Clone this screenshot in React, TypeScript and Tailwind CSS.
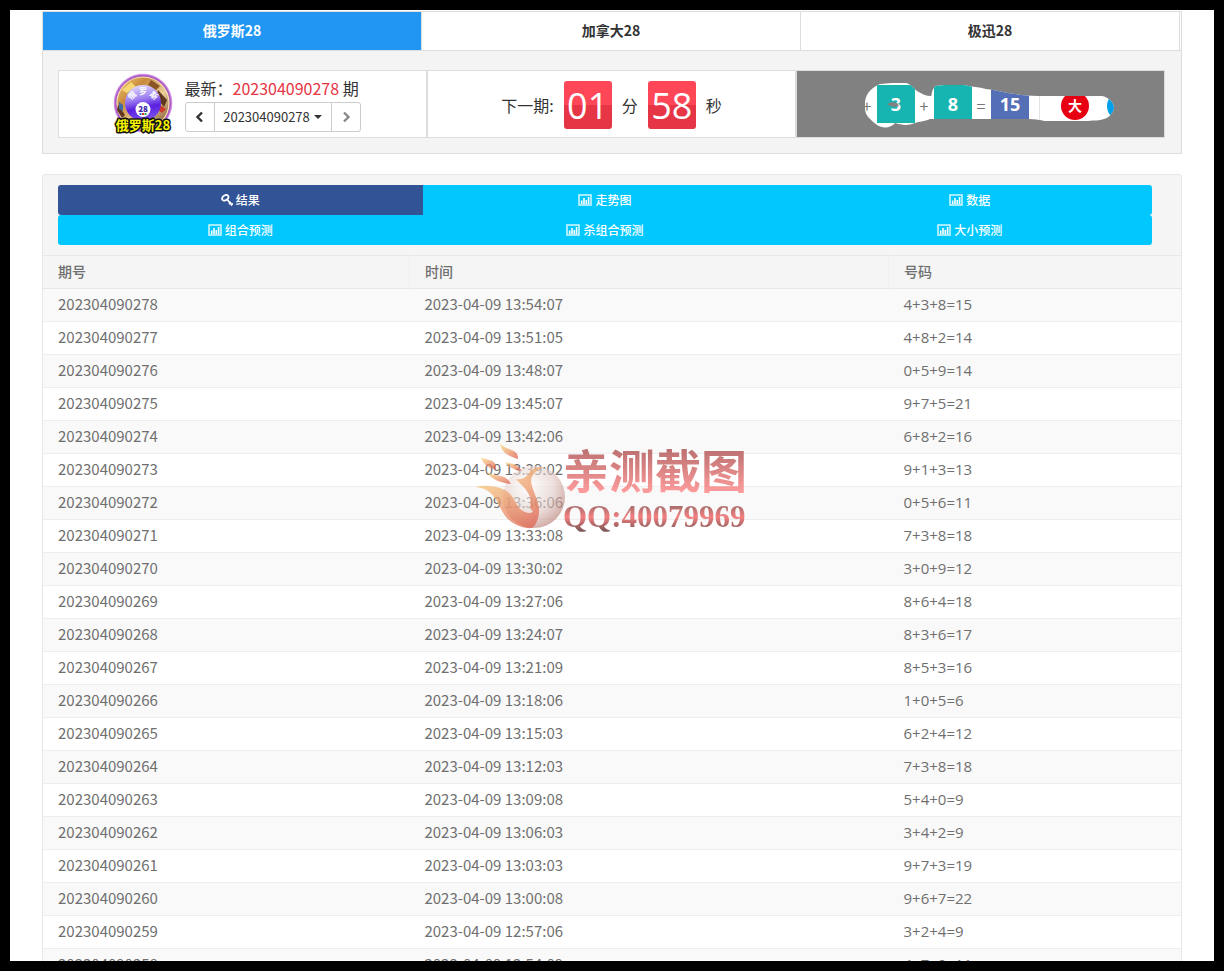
import React, { useState } from 'react';

const font = `font-['Noto_Sans_CJK_SC',sans-serif]`;
const digitFont = `font-['Open_Sans','Noto_Sans_CJK_SC',sans-serif]`;

const games = ['俄罗斯28', '加拿大28', '极迅28'];

const views = ['结果', '走势图', '数据', '组合预测', '杀组合预测', '大小预测'];

const draws = [
  ['202304090278', '2023-04-09 13:54:07', '4+3+8=15'],
  ['202304090277', '2023-04-09 13:51:05', '4+8+2=14'],
  ['202304090276', '2023-04-09 13:48:07', '0+5+9=14'],
  ['202304090275', '2023-04-09 13:45:07', '9+7+5=21'],
  ['202304090274', '2023-04-09 13:42:06', '6+8+2=16'],
  ['202304090273', '2023-04-09 13:39:02', '9+1+3=13'],
  ['202304090272', '2023-04-09 13:36:06', '0+5+6=11'],
  ['202304090271', '2023-04-09 13:33:08', '7+3+8=18'],
  ['202304090270', '2023-04-09 13:30:02', '3+0+9=12'],
  ['202304090269', '2023-04-09 13:27:06', '8+6+4=18'],
  ['202304090268', '2023-04-09 13:24:07', '8+3+6=17'],
  ['202304090267', '2023-04-09 13:21:09', '8+5+3=16'],
  ['202304090266', '2023-04-09 13:18:06', '1+0+5=6'],
  ['202304090265', '2023-04-09 13:15:03', '6+2+4=12'],
  ['202304090264', '2023-04-09 13:12:03', '7+3+8=18'],
  ['202304090263', '2023-04-09 13:09:08', '5+4+0=9'],
  ['202304090262', '2023-04-09 13:06:03', '3+4+2=9'],
  ['202304090261', '2023-04-09 13:03:03', '9+7+3=19'],
  ['202304090260', '2023-04-09 13:00:08', '9+6+7=22'],
  ['202304090259', '2023-04-09 12:57:06', '3+2+4=9'],
  ['202304090258', '2023-04-09 12:54:09', '4+7+0=11'],
];

function StatsIcon() {
  return (
    <svg className="w-3.5 h-3 shrink-0" viewBox="0 0 14 12" fill="none" stroke="currentColor" aria-hidden="true">
      <rect x="1" y="1" width="12" height="10" strokeWidth="1.5" opacity="0.85" />
      <path d="M3.700 10V6.500M6 10V4M8.300 10V6M10.600 10V3" strokeWidth="1.6" />
    </svg>
  );
}

function KeyIcon() {
  return (
    <svg className="w-3 h-3 shrink-0" viewBox="0 0 12 12" fill="none" stroke="currentColor" aria-hidden="true">
      <ellipse cx="4.3" cy="3.8" rx="3.4" ry="2.4" strokeWidth="1.8" transform="rotate(-35 4.3 3.8)" />
      <path d="M6.200 5.500L11 11.200M8 10.200L10 8M10 11.500L11.800 9.400" strokeWidth="1.7" />
    </svg>
  );
}

function Chevron({ d }: { d: string }) {
  return (
    <svg className="w-3 h-3" viewBox="0 0 12 12" fill="none" stroke="currentColor" strokeWidth="2.4" aria-hidden="true">
      <path d={d} />
    </svg>
  );
}

function GameLogo() {
  return (
    <svg className="w-[60px] h-[62px] shrink-0" viewBox="0 0 60 62" role="img" aria-label="俄罗斯28">
      <defs>
        <radialGradient id="rim">
          <stop offset="0.86" stopColor="#8d3ca6" />
          <stop offset="0.94" stopColor="#b45fce" />
          <stop offset="1" stopColor="#e6c4f0" />
        </radialGradient>
        <linearGradient id="gold" x1="0" y1="0" x2="1" y2="1">
          <stop offset="0" stopColor="#f6d27a" />
          <stop offset="0.3" stopColor="#c98a3c" />
          <stop offset="0.6" stopColor="#e9cf98" />
          <stop offset="1" stopColor="#6b3c1c" />
        </linearGradient>
        <linearGradient id="ball" x1="0.3" y1="0" x2="0.5" y2="1">
          <stop offset="0" stopColor="#e2dcfb" />
          <stop offset="0.4" stopColor="#9a7df0" />
          <stop offset="0.65" stopColor="#5a1fe0" />
          <stop offset="1" stopColor="#7d55ee" />
        </linearGradient>
        <path id="arc" d="M17 31a13.500 13.500 0 0 1 26 0" />
      </defs>
      <circle cx="30" cy="30" r="29.5" fill="url(#rim)" />
      <circle cx="30" cy="30" r="26" fill="url(#gold)" stroke="#f7e3b0" strokeWidth="1.2" />
      <path d="M9 17l9-8 5 5-9 6z" fill="#f7d774" />
      <path d="M38 7l9 6-4 4-8-5z" fill="#8a5424" />
      <path d="M45 17l9 10-3 7-8-10zM5 32l7 10-3 3-5-8z" fill="#5f371c" />
      <path d="M47 32l6 4-4 4-4-3z" fill="#cf3a2a" />
      <path d="M6 29l4 3v6l-4-2z" fill="#3f6da8" />
      <circle cx="30" cy="30" r="18" fill="url(#ball)" />
      <text className="text-[8px] font-bold" fill="#fff">
        <textPath href="#arc" startOffset="50%" textAnchor="middle">俄 罗 斯</textPath>
      </text>
      <circle cx="30" cy="36.5" r="7.5" fill="#fff" />
      <text x="30" y="39" textAnchor="middle" className="text-[8px] font-black" fill="#3b22a8">28</text>
      <path d="M26.500 41h2" stroke="#2a6fd0" strokeWidth="2" />
      <path d="M29 41h2" stroke="#e02d2d" strokeWidth="2" />
      <path d="M31.500 41h2" stroke="#26a04a" strokeWidth="2" />
      <text
        x="30"
        y="57"
        textAnchor="middle"
        className="text-[13px] font-bold"
        fill="#f8f400"
        stroke="#111"
        strokeWidth="3"
        strokeLinejoin="round"
        paintOrder="stroke"
      >
        俄罗斯28
      </text>
    </svg>
  );
}

// Drawn balls seen through a rough opening in the grey cover
function ResultStrip() {
  return (
    <svg className="w-[250px] h-12 shrink-0" viewBox="0 0 250 48" role="img" aria-label="3 + 8 = 15 大">
      <defs>
        <clipPath id="opening">
          <path d="M28 1H42C47 2 49 6 53 9C58 12 62 14 67 14C68 14 67 7 72 4C76 3 80 3 85 3H100C108 5 115 5 122 7C132 8 141 11 151 12C161 14 172 14 184 14H238C244 15 250 20 250 26C249 32 244 36 240 37C235 39 230 38 224 39H180C174 37 165 37 150 37H100C86 37 76 37 66 37C60 40 55 39 51 41C44 44 37 43 31 41C27 46 19 47 13 43C6 37 1 34 1 26V20C2 10 9 5 16 2Z" />
        </clipPath>
      </defs>
      <g clipPath="url(#opening)">
        <rect width="250" height="48" fill="#fff" />
        <rect x="13" y="3" width="38" height="38" fill="#16b5b1" />
        <rect x="70" y="3" width="38" height="38" fill="#16b5b1" />
        <rect x="127" y="3" width="38" height="38" fill="#546fb5" />
        <path d="M175.500 3v40" stroke="#e4e4e4" />
        <circle cx="211" cy="24" r="14" fill="#e60012" />
        <circle cx="258" cy="24" r="15" fill="#00a0e9" />
        <g textAnchor="middle" className="text-base" fill="#777">
          <text x="3" y="30">+</text>
          <text x="60" y="30">+</text>
          <text x="117" y="30">=</text>
        </g>
        <g textAnchor="middle" className={`text-lg font-bold ${digitFont}`} fill="#fff">
          <text x="32" y="29">3</text>
          <text x="89" y="29">8</text>
          <text x="146" y="29">15</text>
        </g>
        <text x="211" y="29" textAnchor="middle" className="text-sm font-bold" fill="#fff">大</text>
      </g>
      <path d="M23 22l5-2 5 1 2 3-4 1-5-1z" fill="#818181" />
    </svg>
  );
}

function Digits({ value }: { value: string }) {
  return (
    <span className={`w-12 h-12 rounded-[3px] text-center text-4xl leading-[50px] text-white bg-linear-to-b from-[#ff4757] from-50% to-[#e63545] to-50% ${digitFont}`}>
      {value}
    </span>
  );
}

function Watermark() {
  return (
    <div className="absolute left-[38.8%] top-[443px] flex items-start pointer-events-none">
      <svg className="w-[92px] h-[88px] shrink-0" viewBox="0 0 92 88" aria-hidden="true">
        <defs>
          <radialGradient id="pearl" cx="0.4" cy="0.35" r="0.7">
            <stop offset="0" stopColor="#fff" stopOpacity="0.6" />
            <stop offset="0.6" stopColor="#e2cbc6" stopOpacity="0.6" />
            <stop offset="1" stopColor="#b87a70" stopOpacity="0.65" />
          </radialGradient>
          <linearGradient id="flame" x1="0" y1="0" x2="0.8" y2="1">
            <stop offset="0" stopColor="#f9dc78" />
            <stop offset="0.4" stopColor="#f3b071" />
            <stop offset="1" stopColor="#df5f4c" />
          </linearGradient>
        </defs>
        <circle cx="59" cy="54" r="31" fill="url(#pearl)" />
        <g fill="url(#flame)" opacity="0.72">
          <path d="M0 44C14 41 29 44 36 52C41 58 42 66 50 69C54 71 57 70 58 68C53 66 57 60 55 54C52 46 46 42 41 36C48 37 51 34 54 30C57 25 62 24 68 24C60 28 57 32 56 37C56 46 65 58 64 70C63 77 61 82 57 85C49 86 40 82 34 77C22 67 24 46 0 44Z" />
          <path d="M11 28C19 35 30 29 36 41C28 40 17 38 11 28Z" />
          <path d="M6 14C11 18 22 15 21 26C12 25 8 21 6 14Z" />
          <path d="M25 0C30 8 44 5 43 16C36 13 27 12 25 0Z" />
          <path d="M30 19C36 21 42 20 47 28C41 27 34 25 30 19Z" />
        </g>
      </svg>
      <div className="-ml-1">
        <div className="text-[46px] leading-[50px] font-bold text-transparent bg-clip-text bg-linear-to-b from-[#b36b6b] to-[#ff9c9c]">
          亲测截图
        </div>
        <div className="pt-2 text-[31px] leading-8 font-bold font-['Liberation_Serif',serif] text-transparent bg-clip-text bg-linear-to-b from-[#a06c6c] from-30% via-[#f47f7f] via-60% to-[#6e5050]">
          QQ:40079969
        </div>
      </div>
    </div>
  );
}

export default function App() {
  const [game, setGame] = useState(0);
  const [view, setView] = useState(0);

  return (
    <div className={`h-screen overflow-hidden border-10 border-black bg-white text-[#333] ${font}`}>
      <main className="px-8">
        <section className="border-x border-b border-[#ddd] bg-[#f4f4f4]">
          <nav className="flex mt-px pr-px bg-white border-y border-[#ddd]">
            {games.map((name, i) => (
              <button
                key={name}
                onClick={() => setGame(i)}
                className={`flex-1 h-[38px] pb-0.5 border-r border-[#ddd] text-sm font-bold ${i === game ? 'bg-[#2196f3] text-white' : 'bg-white'}`}
              >
                {name}
              </button>
            ))}
          </nav>

          <div className="grid grid-cols-3 pt-[19px] pb-[15px] pl-[15px] pr-4">
            <div className="flex items-center justify-center gap-3 h-[68px] pr-3 border border-[#ddd] bg-white">
              <GameLogo />
              <div>
                <p className="text-base leading-6 whitespace-nowrap">
                  最新：<span className="text-[#e63545]">202304090278</span> 期
                </p>
                <div className="flex mt-0.5 h-[30px] rounded-[3px] border border-[#ccc] text-[13px]">
                  <button aria-label="上一期" className="w-7 flex items-center justify-center">
                    <Chevron d="M8 1.500L3.500 6L8 10.500" />
                  </button>
                  <button className="flex items-center justify-center gap-1 w-[118px] border-x border-[#ccc]">
                    202304090278
                    <span className="border-x-4 border-t-4 border-x-transparent border-t-[#333]" />
                  </button>
                  <button aria-label="下一期" className="w-7 flex items-center justify-center text-[#888]">
                    <Chevron d="M4 1.500L8.500 6L4 10.500" />
                  </button>
                </div>
              </div>
            </div>

            <div className="flex items-center justify-center gap-2.5 pt-0.5 border border-[#ddd] bg-white text-base">
              <span>下一期:</span>
              <Digits value="01" />
              <span>分</span>
              <Digits value="58" />
              <span>秒</span>
            </div>

            <div className="flex items-center justify-center pl-4 pt-1 border border-[#ddd] bg-[#818181]">
              <ResultStrip />
            </div>
          </div>
        </section>

        <section className="mt-5 rounded-t-[3px] border border-[#e7e7e7] bg-[#f5f5f5]">
          <div className="grid grid-cols-3 py-2.5 pl-[15px] pr-[29px]">
            {views.map((name, i) => (
              <button
                key={name}
                onClick={() => setView(i)}
                className={`flex items-center justify-center gap-[3px] h-[30px] text-xs font-medium text-white ${i === view ? 'bg-[#325496]' : 'bg-[#00c8ff]'} ${i % 3 === 0 ? 'rounded-l-[3px]' : ''} ${i % 3 === 2 ? 'rounded-r-[3px]' : ''}`}
              >
                {i === 0 ? <KeyIcon /> : <StatsIcon />}
                {name}
              </button>
            ))}
          </div>

          <table className="w-full table-fixed border-collapse text-left text-[#6f6f6f]">
            <thead>
              <tr className="h-[33px] border-y border-[#e7e7e7] text-sm leading-5">
                <th className="w-[32.2%] pl-[15px] pb-0.5 font-medium border-r border-[#f0f0f0]">期号</th>
                <th className="w-[42.1%] pl-[15px] pb-0.5 font-medium border-r border-[#f0f0f0]">时间</th>
                <th className="pl-[15px] pb-0.5 font-medium">号码</th>
              </tr>
            </thead>
            <tbody className="text-[15px] leading-5">
              {draws.map(([issue, time, numbers]) => (
                <tr key={issue} className="h-[33px] border-b border-[#eee] bg-white odd:bg-[#f9f9f9]">
                  <td className="pl-[15px] pb-0.5">{issue}</td>
                  <td className="pl-[15px] pb-0.5">{time}</td>
                  <td className={`pl-[15px] pb-0.5 ${digitFont}`}>{numbers}</td>
                </tr>
              ))}
            </tbody>
          </table>
        </section>
      </main>
      <Watermark />
    </div>
  );
}
